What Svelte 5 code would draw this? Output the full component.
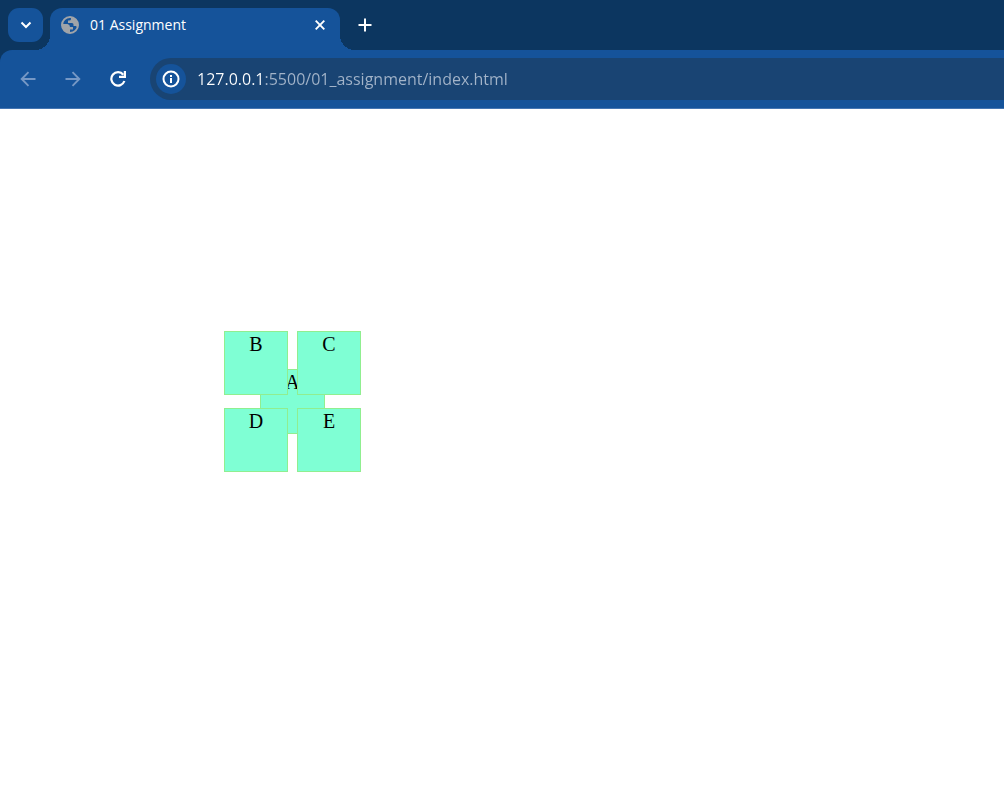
<script>
  let address = $state('127.0.0.1:5500/01_assignment/index.html');
  const tiles = ['B', 'C', 'D', 'E'];
</script>

<div class="browser">
  <header>
    <div class="tabs">
      <button class="search" aria-label="Search tabs">
        <svg width="12" height="8" viewBox="0 0 12 8"><path d="M1.500 1.500 6 6l4.500-4.500" fill="none" stroke="#fff" stroke-width="2" /></svg>
      </button>
      <div class="tab">
        <svg class="globe" width="18" height="18" viewBox="0 0 18 18">
          <circle cx="9" cy="9" r="8" fill="none" stroke="#a0a4a9" stroke-width="2" />
          <path d="M1 8h5.500q2.500.5 2.500 3h3v2.500H9V17Q1 17 1 8zM10 1v2q0 1.500-2 1.500H7v2.500h4q1.500 0 1.500 1.500V10H15l1.500 1.500Q19 3 10 1z" fill="#a0a4a9" />
        </svg>
        <span class="title">01 Assignment</span>
        <button class="close" aria-label="Close tab">
          <svg width="10" height="10" viewBox="0 0 10 10"><path d="m.7.7 8.600 8.600m0-8.600L.7 9.300" fill="none" stroke="#fff" stroke-width="1.900" /></svg>
        </button>
      </div>
      <button class="new" aria-label="New tab">
        <svg width="14" height="14" viewBox="0 0 14 14"><path d="M7 .5v13M.5 7h13" fill="none" stroke="#fff" stroke-width="2" /></svg>
      </button>
    </div>
    <div class="toolbar">
      <button class="nav" aria-label="Back" disabled>
        <svg width="16" height="16" viewBox="0 0 16 16"><path d="M15.500 8H2M8.500 1.200 1.700 8l6.800 6.800" fill="none" stroke="#7698c5" stroke-width="1.900" /></svg>
      </button>
      <button class="nav" aria-label="Forward" disabled>
        <svg width="16" height="16" viewBox="0 0 16 16"><path d="M.5 8H14M7.500 1.200 14.300 8l-6.800 6.800" fill="none" stroke="#7698c5" stroke-width="1.900" /></svg>
      </button>
      <button class="nav" aria-label="Reload">
        <svg width="16" height="16" viewBox="0 0 16 16"><path d="M13.300 3.700A6.700 6.700 0 1 0 14.400 10" fill="none" stroke="#fff" stroke-width="2.200" /><path d="M13.800 0H16v7H9V4.800h4.800z" fill="#fff" /></svg>
      </button>
      <div class="address">
        <button class="info" aria-label="View site information">
          <svg width="18" height="18" viewBox="0 0 18 18"><circle cx="9" cy="9" r="7.500" fill="none" stroke="#fff" stroke-width="2" /><path d="M8 8h2v5H8zM8 5h2v2H8z" fill="#fff" /></svg>
        </button>
        <input type="text" aria-label="Address" spellcheck="false" bind:value={address} />
      </div>
    </div>
  </header>
  <main>
    <div class="cluster">
      <div class="tile center">A</div>
      {#each tiles as name}
        <div class="tile">{name}</div>
      {/each}
    </div>
  </main>
</div>

<style>
  :global(body) {
    margin: 0;
    background: #fff;
  }
  .browser {
    font-family: "Open Sans", "Noto Sans", sans-serif;
    overflow-x: hidden;
  }
  button {
    display: flex;
    align-items: center;
    justify-content: center;
    flex: none;
    padding: 0;
    border: 0;
    background: none;
  }
  header {
    background: #0c3660;
  }
  .tabs {
    display: flex;
    align-items: center;
    height: 42px;
    padding: 8px 8px 0;
  }
  .search {
    width: 35px;
    height: 34px;
    margin: 0 7px 8px 0;
    border-radius: 11px;
    background: #15539a;
  }
  .tab {
    position: relative;
    display: flex;
    align-items: center;
    box-sizing: border-box;
    width: 290px;
    height: 42px;
    padding: 0 15px 8px 11px;
    border-radius: 12px 12px 0 0;
    background: #15539a;
  }
  .tab::before,
  .tab::after {
    content: "";
    position: absolute;
    bottom: 0;
    width: 15px;
    height: 15px;
  }
  .tab::before {
    right: 100%;
    background: radial-gradient(circle at 0 0, transparent 15px, #15539a 15px);
  }
  .tab::after {
    left: 100%;
    background: radial-gradient(circle at 100% 0, transparent 15px, #15539a 15px);
  }
  .title {
    flex: 1;
    margin-left: 11px;
    color: #fff;
    font-size: 14px;
    line-height: 20px;
  }
  .new {
    width: 34px;
    height: 34px;
    margin: 0 0 8px 8px;
  }
  .toolbar {
    display: flex;
    align-items: center;
    height: 42px;
    padding: 8px 0 8px 10px;
    border-bottom: 1px solid #4475b2;
    border-radius: 12px 0 0 0;
    background: #15539a;
  }
  .nav {
    width: 35px;
    height: 34px;
    margin-right: 10px;
  }
  .address {
    display: flex;
    align-items: center;
    flex: 1;
    height: 42px;
    margin-left: 5px;
    padding-left: 6px;
    border-radius: 21px 0 0 21px;
    background: #194473;
  }
  .info {
    width: 30px;
    height: 30px;
    border-radius: 50%;
    background: #15539a;
  }
  input {
    flex: 1;
    min-width: 0;
    height: 28px;
    margin-left: 11px;
    padding: 0;
    border: 0;
    outline: 0;
    background: linear-gradient(to right, #fff 68px, #a3b4c9 68px);
    background-clip: text;
    color: transparent;
    font-family: inherit;
    font-size: 16px;
  }
  main {
    padding: 222px 0 0 224px;
  }
  .cluster {
    position: relative;
    display: grid;
    grid-template-columns: repeat(2, 64px);
    gap: 13px 9px;
    width: max-content;
  }
  .tile {
    position: relative;
    box-sizing: border-box;
    height: 64px;
    border: 1px solid #90ee90;
    background: #7fffd4;
    color: #000;
    font: 20px/24px "Liberation Serif", "Times New Roman", serif;
    text-align: center;
  }
  .center {
    position: absolute;
    inset: 0;
    width: 65px;
    height: 65px;
    margin: auto;
  }
</style>
